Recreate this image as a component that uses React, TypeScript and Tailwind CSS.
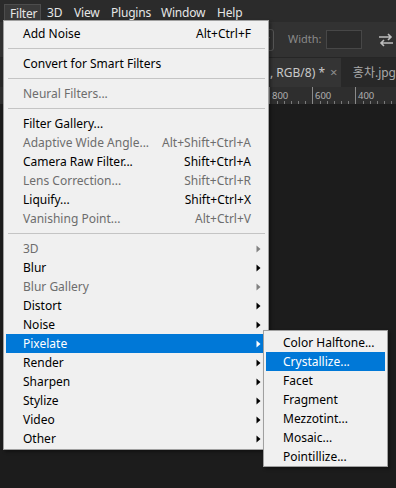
import React from 'react';

type Item =
  | { kind: 'sep' }
  | { kind: 'item'; label: string; shortcut?: string; disabled?: boolean; sub?: boolean; active?: boolean };

const items: Item[] = [
  { kind: 'item', label: 'Add Noise', shortcut: 'Alt+Ctrl+F' },
  { kind: 'sep' },
  { kind: 'item', label: 'Convert for Smart Filters' },
  { kind: 'sep' },
  { kind: 'item', label: 'Neural Filters...', disabled: true },
  { kind: 'sep' },
  { kind: 'item', label: 'Filter Gallery...' },
  { kind: 'item', label: 'Adaptive Wide Angle...', shortcut: 'Alt+Shift+Ctrl+A', disabled: true },
  { kind: 'item', label: 'Camera Raw Filter...', shortcut: 'Shift+Ctrl+A' },
  { kind: 'item', label: 'Lens Correction...', shortcut: 'Shift+Ctrl+R', disabled: true },
  { kind: 'item', label: 'Liquify...', shortcut: 'Shift+Ctrl+X' },
  { kind: 'item', label: 'Vanishing Point...', shortcut: 'Alt+Ctrl+V', disabled: true },
  { kind: 'sep' },
  { kind: 'item', label: '3D', sub: true, disabled: true },
  { kind: 'item', label: 'Blur', sub: true },
  { kind: 'item', label: 'Blur Gallery', sub: true, disabled: true },
  { kind: 'item', label: 'Distort', sub: true },
  { kind: 'item', label: 'Noise', sub: true },
  { kind: 'item', label: 'Pixelate', sub: true, active: true },
  { kind: 'item', label: 'Render', sub: true },
  { kind: 'item', label: 'Sharpen', sub: true },
  { kind: 'item', label: 'Stylize', sub: true },
  { kind: 'item', label: 'Video', sub: true },
  { kind: 'item', label: 'Other', sub: true },
];

const pixelate = ['Color Halftone...', 'Crystallize...', 'Facet', 'Fragment', 'Mezzotint...', 'Mosaic...', 'Pointillize...'];

const Arrow: React.FC<{ color: string }> = ({ color }) => (
  <svg width="5" height="8" viewBox="0 0 5 8" className="shrink-0">
    <path d="M0.5 0.5 L4.5 4 L0.5 7.5 Z" fill={color} />
  </svg>
);

export default function App() {
  return (
    <div
      className="relative w-[396px] h-[488px] overflow-hidden bg-[#1c1c1c] text-[12px]"
      style={{ fontFamily: '"Noto Sans", "Noto Sans CJK KR", sans-serif' }}
    >
      {/* menu bar */}
      <div className="h-[22px] bg-[#2b2b2b] flex items-end text-[#e6e6e6] text-[12px] tracking-[-0.2px]">
        <div className="ml-[4px] w-[37px] h-[18px] pl-[5px] flex items-center bg-[#3a3a3a] border border-[#4d4d4d] border-b-0">Filter</div>
        <div className="flex items-center h-[18px] ml-[6px]">
          <span className="w-[27px]">3D</span>
          <span className="w-[37px]">View</span>
          <span className="w-[50px]">Plugins</span>
          <span className="w-[56px]">Window</span>
          <span>Help</span>
        </div>
      </div>

      {/* options bar */}
      <div className="h-[36px] bg-[#323232] border-b border-[#262626] flex items-center">
        <div className="ml-[250px] w-[24px] h-[22px] border border-[#555] rounded-r-[3px] flex items-center justify-end pr-[3px]">
          <svg width="7" height="5" viewBox="0 0 7 5"><path d="M0.5 0.5 L3.5 4 L6.5 0.5" stroke="#888" fill="none" /></svg>
        </div>
        <span className="ml-[14px] text-[11px] text-[#8a8a8a]">Width:</span>
        <div className="ml-[4px] w-[36px] h-[19px] bg-[#2a2a2a] border border-[#474747]" />
        <svg width="16" height="14" viewBox="0 0 16 14" className="ml-[16px]">
          <path d="M1 4 H13 M10 1 L13 4 L10 7" stroke="#bdbdbd" strokeWidth="1.6" fill="none" />
          <path d="M15 10 H3 M6 7 L3 10 L6 13" stroke="#bdbdbd" strokeWidth="1.6" fill="none" />
        </svg>
      </div>

      {/* tabs */}
      <div className="h-[29px] bg-[#282828] flex items-stretch text-[12px] text-[#c9c9c9]">
        <div className="ml-[250px] w-[97px] bg-[#343434] flex items-center pl-[20px] gap-[5px] whitespace-nowrap">
          <span>, RGB/8) *</span>
          <span className="text-[#8d8d8d] text-[13px]">×</span>
        </div>
        <div className="flex items-center pl-[12px] text-[#a8a8a8] whitespace-nowrap">홍차.jpg</div>
      </div>

      {/* ruler */}
      <div className="h-[17px] bg-[#2e2e2e] relative text-[9.5px] text-[#b0b0b0] leading-none">
        {[269, 312, 355].map((x, i) => (
          <div key={x} className="absolute top-0 h-full border-l border-[#8a8a8a]" style={{ left: x }}>
            <span className="absolute left-[2px] top-[4px]">{['800', '600', '400'][i]}</span>
          </div>
        ))}
        {[277, 284, 291, 298, 305, 320, 327, 334, 341, 348, 363, 370, 377, 384, 391].map((x) => (
          <div key={x} className="absolute bottom-0 h-[3px] border-l border-[#7a7a7a]" style={{ left: x }} />
        ))}
      </div>

      {/* Filter menu */}
      <div className="absolute left-[3px] top-[20px] w-[266px] bg-[#f0f0f0] border border-[#a0a0a0] pt-[3px] pb-[1px] px-[2px] shadow-[2px_2px_3px_rgba(0,0,0,0.35)]">
        {items.map((it, i) =>
          it.kind === 'sep' ? (
            <div key={i} className="h-[11px] flex items-center pl-[2px] pr-[1px]">
              <div className="w-full h-px bg-[#c4c4c4]" />
            </div>
          ) : (
            <div
              key={i}
              className={`h-[19px] flex items-center pl-[17px] pr-[5px] ${
                it.active ? 'bg-[#0078d7] text-white' : it.disabled ? 'text-[#6d6d6d]' : 'text-black'
              }`}
            >
              <span className="flex-1 whitespace-nowrap">{it.label}</span>
              {it.shortcut && <span className="mr-[10px] whitespace-nowrap">{it.shortcut}</span>}
              {it.sub && <Arrow color={it.active ? '#ffffff' : it.disabled ? '#808080' : '#000000'} />}
            </div>
          )
        )}
      </div>

      {/* Pixelate submenu */}
      <div className="absolute left-[263px] top-[330px] w-[125px] bg-[#f0f0f0] border border-[#a0a0a0] pt-[2px] px-[2px] shadow-[2px_2px_3px_rgba(0,0,0,0.35)]">
        {pixelate.map((label, i) => (
          <div
            key={label}
            className={`h-[19px] flex items-center pl-[17px] whitespace-nowrap ${i === 1 ? 'bg-[#0078d7] text-white' : 'text-black'}`}
          >
            {label}
          </div>
        ))}
      </div>
    </div>
  );
}
